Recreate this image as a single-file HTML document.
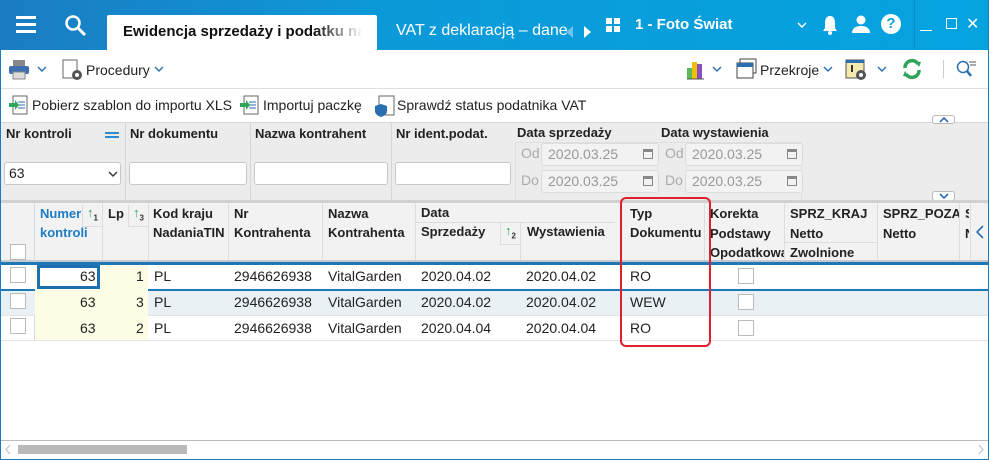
<!DOCTYPE html>
<html><head><meta charset="utf-8"><style>
*{margin:0;padding:0;box-sizing:border-box}
body{width:989px;height:460px;overflow:hidden;font-family:"Liberation Sans",sans-serif;font-size:13px;color:#222;background:#fff;position:relative}
.a{position:absolute}
.top{left:0;top:0;width:989px;height:50px;background:linear-gradient(90deg,#1b7cc2,#0c9ad9 40%,#04a3e0)}
.b{font-weight:bold}
.hd{font-weight:bold;font-size:13px;color:#222;line-height:20px}
.inp{background:#fff;border:1px solid #c8c8c8;border-radius:3px;height:23px}
.dinp{background:#f2f2f2;border:1px solid #dcdcdc;border-radius:3px;height:23px;color:#999;font-size:14px;line-height:21px;padding-left:6px}
.cell{font-size:14px;line-height:26px}
.cb{width:16px;height:16px;border:1px solid #bbb;background:#fff}
.vl{width:1px;background:#ddd}
.ch{position:absolute;width:10px;height:6px}
</style></head><body>
<div class="a top"></div>
<div class="a" style="left:16px;top:16px;width:20px;height:3px;background:#fff"></div>
<div class="a" style="left:16px;top:23px;width:20px;height:3px;background:#fff"></div>
<div class="a" style="left:16px;top:30px;width:20px;height:3px;background:#fff"></div>
<svg class="a" style="left:64px;top:14px" width="24" height="24"><circle cx="9" cy="9" r="6.5" stroke="#fff" stroke-width="2.5" fill="none"/><line x1="14" y1="14" x2="21" y2="21" stroke="#fff" stroke-width="3"/></svg>
<div class="a" style="left:107px;top:15px;width:270px;height:35px;background:#fff;border-radius:2px 2px 0 0"></div>
<div class="a b" style="left:123px;top:23px;font-size:15px;white-space:nowrap;width:240px;overflow:hidden;-webkit-mask-image:linear-gradient(90deg,#000 80%,transparent);color:#111">Ewidencja sprzedaży i podatku należnego</div>
<div class="a" style="left:396px;top:22px;font-size:16px;color:#fff">VAT z deklaracją – dane</div>
<svg class="a" style="left:566px;top:26px" width="8" height="12"><path d="M7 0v12L0 6z" fill="#6fc4ee"/></svg>
<svg class="a" style="left:584px;top:26px" width="8" height="12"><path d="M0 0v12l7-6z" fill="#fff"/></svg>
<div class="a" style="left:606px;top:18px;width:6px;height:6px;background:#fff;box-shadow:8px 0 #fff,0 8px #fff,8px 8px #fff"></div>
<div class="a b" style="left:635px;top:16px;font-size:15px;color:#fff">1 - Foto Świat</div>
<svg class="ch" style="left:797px;top:22px"><path d="M1 1l4 4 4-4" stroke="#fff" stroke-width="1.4" fill="none"/></svg>
<svg class="a" style="left:822px;top:15px" width="16" height="20"><path d="M8 1c-4 0-5 4-5 7v5l-2 3h14l-2-3V8c0-3-1-7-5-7z" fill="#fff"/><circle cx="8" cy="18" r="2" fill="#fff"/></svg>
<svg class="a" style="left:852px;top:15px" width="18" height="18"><circle cx="9" cy="5" r="4.5" fill="#fff"/><path d="M0 18c0-5 4-7 9-7s9 2 9 7z" fill="#fff"/></svg>
<div class="a b" style="left:881px;top:14px;width:20px;height:20px;border-radius:50%;background:#fff;color:#0aa0dc;text-align:center;line-height:20px;font-size:15px">?</div>
<div class="a" style="left:914px;top:0;width:1px;height:50px;background:#1388c4"></div>
<div class="a" style="left:920px;top:30px;width:12px;height:1px;background:#fff"></div>
<div class="a" style="left:946px;top:18px;width:11px;height:11px;border:1.5px solid #fff"></div>
<div class="a" style="left:966px;top:14px;color:#fff;font-size:16px">✕</div>
<!-- toolbar -->
<svg class="a" style="left:8px;top:59px" width="22" height="22"><rect x="5" y="1" width="12" height="6" fill="#888"/><rect x="1" y="7" width="20" height="8" rx="2" fill="#3d6fb0"/><rect x="5" y="13" width="12" height="7" fill="#ddd" stroke="#888"/></svg>
<svg class="ch" style="left:37px;top:66px"><path d="M1 1l4 4 4-4" stroke="#2a6fb0" stroke-width="1.4" fill="none"/></svg>
<svg class="a" style="left:62px;top:59px" width="22" height="22"><rect x="1" y="1" width="14" height="18" fill="#fff" stroke="#666"/><circle cx="15" cy="16" r="5" fill="#555"/><circle cx="15" cy="16" r="2" fill="#fff"/></svg>
<div class="a" style="left:86px;top:62px;font-size:14px">Procedury</div>
<svg class="ch" style="left:154px;top:66px"><path d="M1 1l4 4 4-4" stroke="#2a6fb0" stroke-width="1.4" fill="none"/></svg>
<svg class="a" style="left:686px;top:58px" width="22" height="22"><rect x="1" y="10" width="5" height="11" fill="#5cb85c"/><rect x="6" y="4" width="5" height="17" fill="#f0c000"/><rect x="11" y="6" width="5" height="15" fill="#8a4fc0"/><line x1="1" y1="21" x2="18" y2="21" stroke="#555"/></svg>
<svg class="ch" style="left:712px;top:66px"><path d="M1 1l4 4 4-4" stroke="#2a6fb0" stroke-width="1.4" fill="none"/></svg>
<svg class="a" style="left:736px;top:58px" width="22" height="22"><rect x="4" y="1" width="16" height="14" fill="#fff" stroke="#444"/><rect x="1" y="5" width="16" height="15" fill="#fff" stroke="#444"/><rect x="1" y="5" width="16" height="4" fill="#2a6fb0"/></svg>
<div class="a" style="left:760px;top:62px;font-size:14px">Przekroje</div>
<svg class="ch" style="left:823px;top:66px"><path d="M1 1l4 4 4-4" stroke="#2a6fb0" stroke-width="1.4" fill="none"/></svg>
<svg class="a" style="left:845px;top:59px" width="24" height="22"><rect x="1" y="1" width="18" height="18" fill="#f5e9b0" stroke="#555"/><rect x="1" y="1" width="18" height="3" fill="#2a6fb0"/><rect x="6" y="6" width="2" height="7" fill="#333"/><circle cx="16" cy="16" r="5" fill="#555"/><circle cx="16" cy="16" r="2" fill="#fff"/></svg>
<svg class="ch" style="left:877px;top:66px"><path d="M1 1l4 4 4-4" stroke="#2a6fb0" stroke-width="1.4" fill="none"/></svg>
<svg class="a" style="left:901px;top:58px" width="22" height="22"><path d="M4 10a7 7 0 0 1 13-4" stroke="#2fa55a" stroke-width="3.5" fill="none"/><path d="M18 12a7 7 0 0 1-13 4" stroke="#2fa55a" stroke-width="3.5" fill="none"/><path d="M14 3l6 1-2 5z" fill="#2fa55a"/><path d="M8 19l-6-1 2-5z" fill="#2fa55a"/></svg>
<div class="a" style="left:943px;top:60px;width:1px;height:18px;background:#ccc"></div>
<svg class="a" style="left:956px;top:58px" width="22" height="22"><circle cx="7" cy="9" r="5.5" stroke="#2a6fb0" stroke-width="1.5" fill="none"/><line x1="11" y1="13" x2="15" y2="18" stroke="#2a6fb0" stroke-width="2.5"/><line x1="13" y1="4" x2="20" y2="4" stroke="#555"/><line x1="14" y1="7" x2="20" y2="7" stroke="#555"/></svg>
<div class="a" style="left:0;top:88px;width:989px;height:1px;background:#e0e0e0"></div>
<!-- actions -->
<svg class="a" style="left:8px;top:94px" width="22" height="22"><rect x="5" y="2" width="14" height="18" fill="#fff" stroke="#666"/><line x1="10" y1="8" x2="17" y2="8" stroke="#2a6fb0"/><line x1="10" y1="11" x2="17" y2="11" stroke="#2a6fb0"/><line x1="10" y1="14" x2="17" y2="14" stroke="#2a6fb0"/><path d="M1 9h6v-3l4 5-4 5v-3H1z" fill="#2fa55a"/></svg>
<div class="a" style="left:32px;top:97px;font-size:14px">Pobierz szablon do importu XLS</div>
<svg class="a" style="left:239px;top:94px" width="22" height="22"><rect x="5" y="2" width="14" height="18" fill="#fff" stroke="#666"/><line x1="10" y1="8" x2="17" y2="8" stroke="#2a6fb0"/><line x1="10" y1="11" x2="17" y2="11" stroke="#2a6fb0"/><line x1="10" y1="14" x2="17" y2="14" stroke="#2a6fb0"/><path d="M1 9h6v-3l4 5-4 5v-3H1z" fill="#2fa55a"/></svg>
<div class="a" style="left:263px;top:97px;font-size:14px">Importuj paczkę</div>
<svg class="a" style="left:374px;top:94px" width="22" height="24"><rect x="5" y="2" width="15" height="19" fill="#fff" stroke="#666"/><path d="M1 12l6-2 6 2v5c0 3-3 5-6 6-3-1-6-3-6-6z" fill="#2a6fb0"/></svg>
<div class="a" style="left:397px;top:97px;font-size:14px">Sprawdź status podatnika VAT</div>
<!-- filter area -->
<div class="a" style="left:0;top:122px;width:989px;height:78px;background:#ececec;border-top:1px solid #d6d6d6"></div>
<div class="a" style="left:932px;top:115px;width:23px;height:9px;background:#fff;border:1px solid #bbb;border-radius:3px"><svg class="ch" style="left:6px;top:1px"><path d="M1 5l4-4 4 4" stroke="#2a6fb0" stroke-width="1.6" fill="none"/></svg></div>
<div class="a" style="left:932px;top:191px;width:23px;height:10px;background:#fff;border:1px solid #bbb;border-radius:3px"><svg class="ch" style="left:6px;top:1px"><path d="M1 1l4 4 4-4" stroke="#2a6fb0" stroke-width="1.6" fill="none"/></svg></div>
<div class="a" style="left:125px;top:123px;width:1px;height:77px;background:#d6d6d6"></div>
<div class="a" style="left:250px;top:123px;width:1px;height:77px;background:#d6d6d6"></div>
<div class="a" style="left:391px;top:123px;width:1px;height:77px;background:#d6d6d6"></div>
<div class="a hd" style="left:6px;top:124px">Nr kontroli</div>
<div class="a" style="left:105px;top:132px;width:14px;height:2px;background:#2a8ad0;box-shadow:0 4px #2a8ad0"></div>
<div class="a hd" style="left:130px;top:124px">Nr dokumentu</div>
<div class="a hd" style="left:255px;top:124px">Nazwa kontrahent</div>
<div class="a hd" style="left:396px;top:124px">Nr ident.podat.</div>
<div class="a inp" style="left:4px;top:162px;width:117px;font-size:14px;line-height:21px;padding-left:4px">63<svg class="ch" style="left:103px;top:8px"><path d="M1 1l4 4 4-4" stroke="#333" stroke-width="1.4" fill="none"/></svg></div>
<div class="a inp" style="left:129px;top:162px;width:118px"></div>
<div class="a inp" style="left:254px;top:162px;width:134px"></div>
<div class="a inp" style="left:395px;top:162px;width:116px"></div>
<div class="a" style="left:515px;top:142px;width:287px;height:58px;border:1px solid #e0e0e0;border-bottom:none"></div>
<div class="a hd" style="left:517px;top:123px">Data sprzedaży</div>
<div class="a hd" style="left:661px;top:123px">Data wystawienia</div>
<div class="a" style="left:521px;top:145px;color:#aaa;font-size:14px">Od</div>
<div class="a" style="left:521px;top:172px;color:#aaa;font-size:14px">Do</div>
<div class="a" style="left:665px;top:145px;color:#aaa;font-size:14px">Od</div>
<div class="a" style="left:665px;top:172px;color:#aaa;font-size:14px">Do</div>
<div class="a dinp" style="left:541px;top:143px;width:118px">2020.03.25</div>
<div class="a dinp" style="left:541px;top:170px;width:118px">2020.03.25</div>
<div class="a dinp" style="left:685px;top:143px;width:118px">2020.03.25</div>
<div class="a dinp" style="left:685px;top:170px;width:118px">2020.03.25</div>
<div class="a" style="left:643px;top:149px;width:10px;height:10px;border:1.5px solid #888;border-top-width:3px"></div>
<div class="a" style="left:643px;top:176px;width:10px;height:10px;border:1.5px solid #888;border-top-width:3px"></div>
<div class="a" style="left:787px;top:149px;width:10px;height:10px;border:1.5px solid #888;border-top-width:3px"></div>
<div class="a" style="left:787px;top:176px;width:10px;height:10px;border:1.5px solid #888;border-top-width:3px"></div>
<!-- grid header -->
<div class="a" style="left:0;top:200px;width:989px;height:3px;background:#d0d0d0"></div>
<div class="a" style="left:0;top:203px;width:989px;height:59px;background:#f2f2f2"></div>
<div class="a" style="left:0;top:260px;width:989px;height:2px;background:#c8c8c8"></div>
<div class="a" style="left:34px;top:203px;width:1px;height:138px;background:#d0dbe5"></div>
<div class="a vl" style="left:102px;top:203px;height:57px"></div>
<div class="a vl" style="left:148px;top:203px;height:57px"></div>
<div class="a vl" style="left:228px;top:203px;height:57px"></div>
<div class="a vl" style="left:322px;top:203px;height:57px"></div>
<div class="a vl" style="left:415px;top:203px;height:57px"></div>
<div class="a vl" style="left:520px;top:222px;height:38px"></div>
<div class="a vl" style="left:416px;top:222px;width:199px;height:1px"></div>
<div class="a vl" style="left:704px;top:203px;height:57px"></div>
<div class="a vl" style="left:784px;top:203px;height:57px"></div>
<div class="a vl" style="left:785px;top:242px;width:92px;height:1px"></div>
<div class="a vl" style="left:877px;top:203px;height:57px"></div>
<div class="a vl" style="left:959px;top:203px;height:57px"></div>
<div class="a cb" style="left:10px;top:244px"></div>
<div class="a hd" style="left:40px;top:204px;color:#1c7cc4;line-height:19px">Numer<br>kontroli</div>
<div class="a" style="left:82px;top:205px;width:20px;height:22px;background:#f2f2f2;border-left:1px solid #ddd;border-bottom:1px solid #ddd;color:#2fa55a;font-size:13px;font-weight:bold;padding-left:4px">↑<sub style="color:#333;font-size:8px">1</sub></div>
<div class="a hd" style="left:108px;top:204px">Lp</div>
<div class="a" style="left:128px;top:205px;width:20px;height:22px;border-left:1px solid #ddd;border-bottom:1px solid #ddd;color:#2fa55a;font-size:13px;font-weight:bold;padding-left:4px">↑<sub style="color:#333;font-size:8px">3</sub></div>
<div class="a hd" style="left:153px;top:204px;line-height:19px">Kod kraju<br>NadaniaTIN</div>
<div class="a hd" style="left:234px;top:204px;line-height:19px">Nr<br>Kontrahenta</div>
<div class="a hd" style="left:328px;top:204px;line-height:19px">Nazwa<br>Kontrahenta</div>
<div class="a hd" style="left:421px;top:203px;line-height:19px">Data</div>
<div class="a hd" style="left:421px;top:222px">Sprzedaży</div>
<div class="a" style="left:500px;top:223px;width:20px;height:22px;border-left:1px solid #ddd;border-bottom:1px solid #ddd;color:#2fa55a;font-size:13px;font-weight:bold;padding-left:4px">↑<sub style="color:#333;font-size:8px">2</sub></div>
<div class="a hd" style="left:527px;top:222px">Wystawienia</div>
<div class="a hd" style="left:630px;top:204px;line-height:19px">Typ<br>Dokumentu</div>
<div class="a hd" style="left:710px;top:204px;line-height:19.5px;width:74px;overflow:hidden;white-space:nowrap">Korekta<br>Podstawy<br>Opodatkowania</div>
<div class="a hd" style="left:790px;top:204px;line-height:19.5px">SPRZ_KRAJ<br>Netto<br>Zwolnione</div>
<div class="a hd" style="left:883px;top:204px;line-height:19.5px;width:76px;overflow:hidden;white-space:nowrap">SPRZ_POZA<br>Netto</div>
<div class="a hd" style="left:965px;top:204px;line-height:19.5px;width:4px;overflow:hidden">S<br>N</div>
<div class="a" style="left:970px;top:203px;width:19px;height:57px;background:#f2f2f2;border-left:1px solid #ddd"><svg class="a" style="left:5px;top:22px" width="8" height="14"><path d="M7 1L1 7l6 6" stroke="#2a6fb0" stroke-width="1.6" fill="none"/></svg></div>
<!-- rows -->
<div class="a" style="left:0;top:262px;width:989px;height:3px;background:#1d78b8"></div>
<div class="a" style="left:0;top:265px;width:989px;height:24px;background:#fff"></div>
<div class="a" style="left:0;top:289px;width:989px;height:2px;background:#1d78b8"></div>
<div class="a" style="left:0;top:291px;width:989px;height:24px;background:#eaf1f4"></div>
<div class="a" style="left:0;top:315px;width:989px;height:1px;background:#e4e4e4"></div>
<div class="a" style="left:0;top:340px;width:989px;height:1px;background:#e4e4e4"></div>
<div class="a" style="left:35px;top:265px;width:113px;height:75px;background:#fdfde6"></div>
<div class="a" style="left:37px;top:265px;width:63px;height:24px;border:3px solid #1d6fb0;background:#fff"></div>
<div class="a cb" style="left:10px;top:267px"></div>
<div class="a cb" style="left:10px;top:293px"></div>
<div class="a cb" style="left:10px;top:318px"></div>
<div class="a cb" style="left:738px;top:268px"></div>
<div class="a cb" style="left:738px;top:294px"></div>
<div class="a cb" style="left:738px;top:320px"></div>
<div class="a cell" style="left:0;top:263px;width:989px">
<span class="a" style="left:80px">63</span><span class="a" style="left:136px">1</span><span class="a" style="left:154px">PL</span><span class="a" style="left:234px">2946626938</span><span class="a" style="left:328px">VitalGarden</span><span class="a" style="left:421px">2020.04.02</span><span class="a" style="left:526px">2020.04.02</span><span class="a" style="left:630px">RO</span></div>
<div class="a cell" style="left:0;top:289px;width:989px">
<span class="a" style="left:80px">63</span><span class="a" style="left:136px">3</span><span class="a" style="left:154px">PL</span><span class="a" style="left:234px">2946626938</span><span class="a" style="left:328px">VitalGarden</span><span class="a" style="left:421px">2020.04.02</span><span class="a" style="left:526px">2020.04.02</span><span class="a" style="left:630px">WEW</span></div>
<div class="a cell" style="left:0;top:315px;width:989px">
<span class="a" style="left:80px">63</span><span class="a" style="left:136px">2</span><span class="a" style="left:154px">PL</span><span class="a" style="left:234px">2946626938</span><span class="a" style="left:328px">VitalGarden</span><span class="a" style="left:421px">2020.04.04</span><span class="a" style="left:526px">2020.04.04</span><span class="a" style="left:630px">RO</span></div>
<div class="a" style="left:620px;top:197px;width:91px;height:150px;border:2px solid #e0202a;border-radius:6px"></div>
<!-- scrollbar -->
<div class="a" style="left:0;top:440px;width:989px;height:1px;background:#bbb"></div>
<div class="a" style="left:0;top:441px;width:989px;height:17px;background:#fff"></div>
<div class="a" style="left:18px;top:445px;width:169px;height:9px;background:#b9b9b9"></div>
<svg class="a" style="left:5px;top:444px" width="6" height="11"><path d="M5 1L1 5.5 5 10" stroke="#bbb" fill="none"/></svg>
<svg class="a" style="left:978px;top:444px" width="6" height="11"><path d="M1 1l4 4.5L1 10" stroke="#bbb" fill="none"/></svg>
<div class="a" style="left:0;top:0;width:989px;height:460px;border:1px solid #1a7cc0;border-top:none"></div>
</body></html>
